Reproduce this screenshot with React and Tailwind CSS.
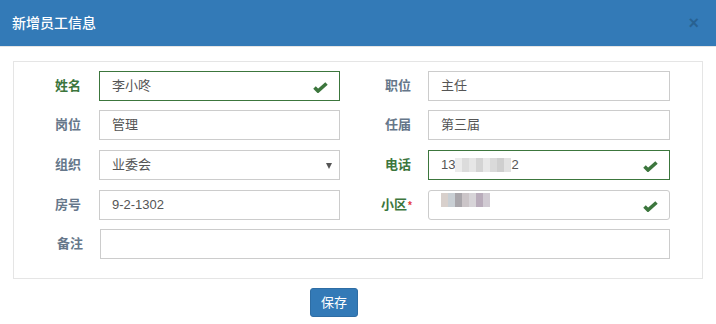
import React from "react";

const font = { fontFamily: '"Liberation Sans", "Noto Sans CJK SC", sans-serif' };

function Check() {
  return (
    <svg width="15" height="11" viewBox="0 0 15 11" className="absolute right-[11px] top-[10px]">
      <path d="M1.5 5.5 L5 9 L13.5 1.5" fill="none" stroke="#3c763d" strokeWidth="3.6" strokeLinejoin="miter" />
    </svg>
  );
}

function Label({ children, ok, width = "w-[85px]", pr = "pr-[18px]", star }) {
  return (
    <div className={`${width} ${pr} shrink-0 text-right text-[13px] font-bold ${ok ? "text-[#3c763d]" : "text-[#66778a]"}`}>
      {children}
      {star && <span className="ml-[1px] text-[10px] text-[#e4393c]">*</span>}
    </div>
  );
}

function Field({ value, ok, width = "w-[241px]", rounded, children, arrow }) {
  return (
    <div
      className={`relative flex h-[30px] ${width} shrink-0 items-center border bg-white pl-[12px] text-[13px] text-[#555] ${
        ok ? "border-[#3c763d]" : "border-[#cccccc]"
      } ${rounded ? "rounded-[3px]" : ""}`}
    >
      {value}
      {children}
      {ok && <Check />}
      {arrow && (
        <span className="absolute right-[7px] top-[12px] h-0 w-0 border-l-[3px] border-r-[3px] border-t-[6px] border-l-transparent border-r-transparent border-t-[#555]" />
      )}
    </div>
  );
}

function Blur({ cells }) {
  return (
    <span className="inline-flex h-[14px]">
      {cells.map((c, i) => (
        <span key={i} className="inline-block h-full w-[7px]" style={{ background: c }} />
      ))}
    </span>
  );
}

export default function App() {
  return (
    <div className="h-[324px] w-[716px] overflow-hidden bg-white" style={font}>
      <div className="flex h-[46px] items-center justify-between bg-[#337ab7] pl-[12px] pr-[17px]">
        <span className="text-[14px] font-medium text-white">新增员工信息</span>
        <span className="text-[18px] font-bold leading-none text-black opacity-20">×</span>
      </div>
      <div className="h-px bg-[#e5e5e5]" />

      <div className="mx-[13px] mt-[14px] border border-[#e5e5e5] pb-[19px] pt-[9px]">
        <div className="flex items-center">
          <Label ok>姓名</Label>
          <Field value="李小咚" ok />
          <Label width="w-[88px]" pr="pr-[17px]">职位</Label>
          <Field value="主任" width="w-[242px]" />
        </div>
        <div className="mt-[9px] flex items-center">
          <Label>岗位</Label>
          <Field value="管理" />
          <Label width="w-[88px]" pr="pr-[17px]">任届</Label>
          <Field value="第三届" width="w-[242px]" />
        </div>
        <div className="mt-[10px] flex items-center">
          <Label>组织</Label>
          <Field value="业委会" arrow />
          <Label ok width="w-[88px]" pr="pr-[17px]">电话</Label>
          <Field width="w-[242px]" ok>
            <span>13</span>
            <Blur cells={["#ececec", "#dcdcdc", "#e6e6e6", "#d4d4d4", "#e8e8e8", "#dadada", "#cfcfcf", "#e2e2e2"]} />
            <span>2</span>
          </Field>
        </div>
        <div className="mt-[10px] flex items-center">
          <Label>房号</Label>
          <Field value="9-2-1302" />
          <Label ok star width="w-[88px]" pr="pr-[16px]">小区</Label>
          <Field width="w-[242px]" rounded>
            <span className="-mt-[4px]">
              <Blur cells={["#d8d0cc", "#c9cfd4", "#a9a6ab", "#cbc5c8", "#d7d4d8", "#b9acbb", "#d1cbd3"]} />
            </span>
            <Check />
          </Field>
        </div>
        <div className="mt-[9px] flex items-center">
          <Label width="w-[86px]" pr="pr-[17px]">备注</Label>
          <Field width="w-[570px]" />
        </div>
      </div>

      <div className="mt-[9px] pl-[310px]">
        <button className="h-[29px] w-[48px] rounded-[3px] border border-[#2e6da4] bg-[#337ab7] text-[13px] text-white" type="button">
          保存
        </button>
      </div>
    </div>
  );
}
